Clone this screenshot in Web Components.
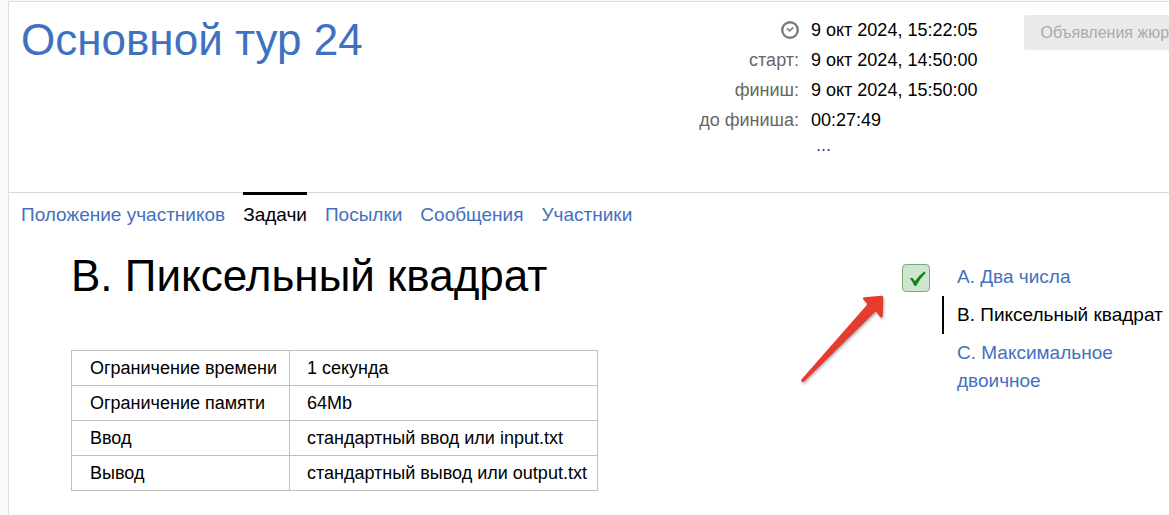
<!DOCTYPE html>
<html lang="ru">
<head>
<meta charset="utf-8">
<meta name="viewport" content="width=device-width, initial-scale=1">
<title>Основной тур 24</title>
<style>
  html { background: #fff; }
  body {
    margin: 0;
    background: #fff;
    overflow-x: hidden;
    font-family: "Liberation Sans", Arial, sans-serif;
    font-size: 18px;
    color: #000;
    --link: #4470bd;
    --line: #d9d9d9;
  }
</style>
</head>
<body>
<contest-app></contest-app>

<script>
const define = (name, html) => {
  const template = document.createElement('template');
  template.innerHTML = html;
  customElements.define(name, class extends HTMLElement {
    constructor() {
      super();
      this.attachShadow({ mode: 'open' }).append(template.content.cloneNode(true));
    }
  });
};

define('contest-clock', `
  <style>
    :host { display: block; }
    dl { display: grid; grid-template-columns: auto auto; column-gap: 12px; margin: 0; line-height: 30px; white-space: nowrap; }
    dt { color: #666; text-align: right; }
    dd { margin: 0; }
    svg { display: block; margin: 6px 0 6px auto; }
    a { color: #1a3dc1; text-decoration: none; padding-left: 5px; }
    .more { line-height: 20px; }
  </style>
  <dl>
    <dt><svg width="18" height="18" viewBox="0 0 18 18" role="img" aria-label="Сейчас">
      <circle cx="9" cy="9" r="7.8" fill="#fff" stroke="#787c81" stroke-width="2.4"/>
      <path d="M6 7.3 8.5 9.8 12.3 6.5" fill="none" stroke="#85898e" stroke-width="1.8"/>
    </svg></dt><dd>9 окт 2024, 15:22:05</dd>
    <dt>старт:</dt><dd>9 окт 2024, 14:50:00</dd>
    <dt>финиш:</dt><dd>9 окт 2024, 15:50:00</dd>
    <dt>до финиша:</dt><dd>00:27:49</dd>
    <dt></dt><dd class="more"><a href="#more">...</a></dd>
  </dl>`);

define('contest-header', `
  <style>
    :host { display: flex; align-items: flex-start; box-sizing: border-box; min-height: 190px; padding: 13px 7px 0 12px; }
    h1 { flex: 1; margin: 0; font-size: 44px; line-height: 50px; font-weight: 400; }
    a { color: #3e72c0; text-decoration: none; }
    button { flex: none; margin-left: 47px; height: 35px; padding: 0 16px; border: 0; border-radius: 3px; background: #eaeaea; color: #aaa; font: inherit; font-size: 16px; white-space: nowrap; }
  </style>
  <h1><a href="#contest"><slot></slot></a></h1>
  <contest-clock></contest-clock>
  <button type="button" disabled>Объявления жюри</button>`);

customElements.define('contest-tab', class extends HTMLElement {
  constructor() {
    super();
    this.attachShadow({ mode: 'open' }).innerHTML = `
      <style>
        :host { display: block; }
        a { display: block; border-top: 3px solid transparent; margin-top: -1px; font-size: 19px; line-height: 40px; color: var(--link); text-decoration: none; white-space: nowrap; }
        :host([active]) a { border-top-color: #000; color: #000; }
      </style>
      <a href="#tab"><slot></slot></a>`;
  }
});

define('contest-nav', `
  <style>
    :host { display: block; border-top: 1px solid var(--line); }
    nav { display: flex; gap: 18px; padding-left: 12px; }
  </style>
  <nav><slot></slot></nav>`);

define('problem-limits', `
  <style>
    :host { display: block; }
    table { border-collapse: collapse; }
    th, td { border: 1px solid #bfbfbf; padding: 6px 12px 6px 18px; font-weight: 400; font-size: 18px; line-height: 22px; text-align: left; white-space: nowrap; }
    td { padding-right: 10px; padding-left: 17px; }
  </style>
  <table>
    <tbody>
      <tr><th scope="row">Ограничение времени</th><td>1 секунда</td></tr>
      <tr><th scope="row">Ограничение памяти</th><td>64Mb</td></tr>
      <tr><th scope="row">Ввод</th><td>стандартный ввод или input.txt</td></tr>
      <tr><th scope="row">Вывод</th><td>стандартный вывод или output.txt</td></tr>
    </tbody>
  </table>`);

define('solved-mark', `
  <style>
    :host { display: block; box-sizing: border-box; width: 28px; height: 28px; border: 1px solid #78ab78; border-radius: 4px; background: #cfe5cf; }
    svg { display: block; }
  </style>
  <svg width="26" height="26" viewBox="0 0 26 26" role="img" aria-label="Решена">
    <path d="M7 13.5Q8.8 11.6 10.4 14L12 16.3Q15.8 10.4 21 6.8Q22.8 6.3 22.4 8.2Q17 13.4 13.6 20.2Q12.3 21.6 11 20.3Q9.5 16.4 7 13.5Z" fill="#0d860d"/>
  </svg>`);

customElements.define('problem-item', class extends HTMLElement {
  constructor() {
    super();
    this.attachShadow({ mode: 'open' }).innerHTML = `
      <style>
        :host { display: grid; grid-template-columns: 28px 1fr; column-gap: 12px; align-items: start; }
        a { grid-column: 2; border-left: 2px solid transparent; padding: 5px 0 5px 13px; font-size: 19px; line-height: 28px; color: var(--link); text-decoration: none; }
        :host([active]) a { border-left-color: #000; color: #000; }
        ::slotted(solved-mark) { grid-row: 1; grid-column: 1; margin-top: 6px; }
      </style>
      <slot name="mark"></slot><a href="#problem"><slot></slot></a>`;
  }
});

define('pointer-arrow', `
  <style>
    :host { display: block; width: 90px; height: 96px; }
    svg { display: block; filter: drop-shadow(1px 2px 1px #0004); }
  </style>
  <svg width="90" height="96" viewBox="0 0 90 96" aria-hidden="true">
    <path d="M1.4 87.5 66.4 13.4Q67.6 11.8 66.6 10.9L63.4 7.6Q62 5.8 64.2 5.3L81.5 3.8Q83.3 3.8 83.3 5.6L82.8 23.6Q81.8 27 80 24.8L76.8 20.4Q75.8 19.2 74.6 20.5L4.2 89.6Q2.8 90.6 1.7 89.5Q.7 88.5 1.4 87.5Z" fill="#e63b2f"/>
  </svg>`);

define('problem-list', `
  <style>
    :host { display: block; position: relative; }
    pointer-arrow { position: absolute; left: -102px; top: 34px; }
    nav { display: grid; }
  </style>
  <nav aria-label="Задачи"><slot></slot></nav>
  <pointer-arrow></pointer-arrow>`);

define('problem-page', `
  <style>
    :host { display: grid; grid-template-columns: minmax(0, 1fr) 275px; column-gap: 40px; padding: 15px 24px 16px 62px; }
    h2 { margin: 0 0 48px; font-size: 44px; line-height: 52px; font-weight: 400; }
    problem-list { margin-top: 8px; }
  </style>
  <main>
    <h2>B. Пиксельный квадрат</h2>
    <problem-limits></problem-limits>
  </main>
  <problem-list>
    <problem-item><solved-mark slot="mark"></solved-mark>A. Два числа</problem-item>
    <problem-item active>B. Пиксельный квадрат</problem-item>
    <problem-item>C. Максимальное двоичное</problem-item>
  </problem-list>`);

define('contest-app', `
  <style>
    :host { display: block; overflow: hidden; padding: 1px 0 0 8px; background: #fafafa; }
    .card { box-sizing: border-box; min-height: calc(100vh - 1px); margin-right: -32px; border: solid #dedede; border-width: 1px 0 0 1px; background: #fff; }
  </style>
  <div class="card">
    <contest-header>Основной тур 24</contest-header>
    <contest-nav>
      <contest-tab>Положение участников</contest-tab>
      <contest-tab active>Задачи</contest-tab>
      <contest-tab>Посылки</contest-tab>
      <contest-tab>Сообщения</contest-tab>
      <contest-tab>Участники</contest-tab>
    </contest-nav>
    <problem-page></problem-page>
  </div>`);
</script>
</body>
</html>
